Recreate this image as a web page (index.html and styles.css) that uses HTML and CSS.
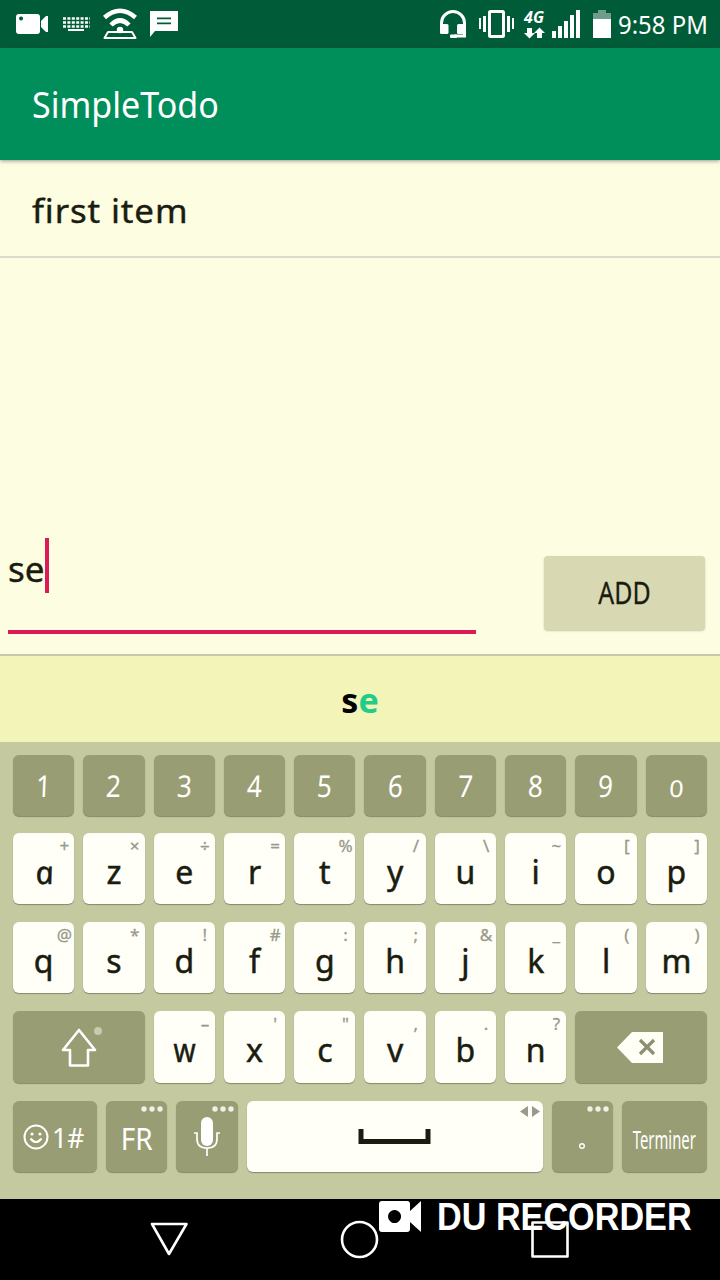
FILE: index.html
```html
<!DOCTYPE html>
<html lang="fr">
<head>
<meta charset="utf-8">
<title>SimpleTodo</title>
<link rel="stylesheet" href="styles.css">
</head>
<body>
<div class="phone">
  <header class="status">
    <svg class="status-icons" width="180" height="48" viewBox="0 0 180 48" fill="#fff">
      <path fill-rule="evenodd" d="M19 14h18q3 0 3 3v14q0 3-3 3H19q-3 0-3-3V17q0-3 3-3zm2 2.500a2 2 0 1 0 .1 0zM41 21l5-5h2v16h-2l-5-5z"/>
      <path d="M63 18.500H90M63 22.500H90M63 26.500H90" stroke="#fff" stroke-width="2.600" stroke-dasharray="3 1.400" fill="none"/>
      <path d="M68 29h16v2H68z"/>
      <g fill="none" stroke="#fff" stroke-width="4.500"><path d="M104.500 17.500Q120 4 135.500 17.500"/><path d="M111 25Q120 16 129 25"/></g>
      <circle cx="120" cy="30" r="3.200"/>
      <path d="M108 32h24l3.500 6H104.500z" fill="none" stroke="#fff" stroke-width="2" stroke-linejoin="round"/>
      <path fill-rule="evenodd" d="M150 11h28v20h-23l-5 6zM157 17.500v1.800h14v-1.800zm0 5v1.800h14v-1.800z"/>
    </svg>
    <div class="status-right">
      <svg width="182" height="48" viewBox="436 0 182 48" fill="#fff">
        <path d="M441.500 29v-6a11.500 11.500 0 0 1 23 0v13h-10" fill="none" stroke="#fff" stroke-width="3"/>
        <rect x="440" y="24" width="8.500" height="10" rx="1.500"/><rect x="457" y="24" width="8.500" height="10" rx="1.500"/><rect x="450" y="34.500" width="7" height="3.500" rx="1"/>
        <rect x="489.500" y="11.500" width="14" height="25" rx="1" fill="none" stroke="#fff" stroke-width="3"/>
        <path d="M479 18h2v11h-2zM483 16h3v16h-3zM507 16h3v16h-3zM512 18h2v11h-2z"/>
        <text class="network" x="524" y="22.500" textLength="20">4G</text>
        <path d="M527 28h5v5h3l-5.500 5.500L524 33h3zM537 38v-5h-3l5.500-5.500L545 33h-3v5z"/>
        <path d="M552 31h4v7h-4zM558 26h4v12h-4zM564 21h4v17h-4zM570 15h4v23h-4zM576 10h4v28h-4z"/>
        <path d="M598 10h8v3h5v6h-18v-6h5z" fill="#6e9d8c"/><path d="M593 19h18v19h-18z"/>
      </svg>
      <span class="clock">9:58 PM</span>
    </div>
  </header>
  <div class="toolbar"><h1>SimpleTodo</h1></div>
  <main class="content">
    <ul class="list"><li><span>first item</span></li></ul>
    <div class="entry">
      <div class="field"><span>se</span><i class="caret"></i></div>
      <button class="add"><span>ADD</span></button>
    </div>
  </main>
  <div class="suggestion">s<span>e</span></div>
  <section class="keyboard">
    <div class="row digits">
      <div class="key dark"><span>1</span></div><div class="key dark"><span>2</span></div><div class="key dark"><span>3</span></div><div class="key dark"><span>4</span></div><div class="key dark"><span>5</span></div><div class="key dark"><span>6</span></div><div class="key dark"><span>7</span></div><div class="key dark"><span>8</span></div><div class="key dark"><span>9</span></div><div class="key dark"><span class="zero">0</span></div>
    </div>
    <div class="row">
      <div class="key"><span class="round">a</span><sup>+</sup></div><div class="key">z<sup>×</sup></div><div class="key">e<sup>÷</sup></div><div class="key">r<sup>=</sup></div><div class="key">t<sup>%</sup></div><div class="key">y<sup>/</sup></div><div class="key">u<sup>\</sup></div><div class="key">i<sup>~</sup></div><div class="key">o<sup>[</sup></div><div class="key">p<sup>]</sup></div>
    </div>
    <div class="row">
      <div class="key">q<sup>@</sup></div><div class="key">s<sup>*</sup></div><div class="key">d<sup>!</sup></div><div class="key">f<sup>#</sup></div><div class="key">g<sup>:</sup></div><div class="key">h<sup>;</sup></div><div class="key">j<sup>&amp;</sup></div><div class="key">k<sup>_</sup></div><div class="key">l<sup>(</sup></div><div class="key">m<sup>)</sup></div>
    </div>
    <div class="row">
      <div class="key dark wide"><svg width="131" height="72" viewBox="0 0 131 72"><path d="M66 19L50 39h7v15.500h18V39H82z" fill="none" stroke="#fff" stroke-width="2.600" stroke-linejoin="round"/><circle cx="85" cy="20" r="4" fill="#c9c9b0"/></svg></div><div class="key"><span class="narrow">w</span><sup>–</sup></div><div class="key">x<sup>'</sup></div><div class="key">c<sup>"</sup></div><div class="key">v<sup>,</sup></div><div class="key">b<sup>.</sup></div><div class="key">n<sup>?</sup></div><div class="key dark wide"><svg width="131" height="72" viewBox="0 0 131 72"><path d="M41 36.500L56 21h31v31H56z" fill="#fffff6"/><path d="M64 29l14 14M78 29l-14 14" stroke="#8d8f72" stroke-width="3.200"/></svg></div>
    </div>
    <div class="row bottom">
      <div class="key dark symbols"><svg width="26" height="26" viewBox="0 0 26 26"><circle cx="13" cy="13" r="11.500" fill="none" stroke="#fff" stroke-width="2"/><circle cx="9" cy="10" r="1.600" fill="#fff"/><circle cx="17" cy="10" r="1.600" fill="#fff"/><path d="M7.500 14.500q5.500 7 11 0" fill="none" stroke="#fff" stroke-width="2.200"/></svg><span>1#</span></div>
      <div class="key dark lang"><span>FR</span><svg class="more" width="24" height="6" viewBox="0 0 24 6"><circle cx="3" cy="3" r="2.700"/><circle cx="11" cy="3" r="2.700"/><circle cx="19" cy="3" r="2.700"/></svg></div>
      <div class="key dark mic"><svg width="26" height="42" viewBox="0 0 26 42"><rect x="7" y="1" width="12" height="29" rx="6" fill="#fff"/><path d="M0 17h3v6q0 9 10 9t10-9v-6h3M13 32v8" fill="none" stroke="#fff" stroke-width="1.700"/></svg><svg class="more" width="24" height="6" viewBox="0 0 24 6"><circle cx="3" cy="3" r="2.700"/><circle cx="11" cy="3" r="2.700"/><circle cx="19" cy="3" r="2.700"/></svg></div>
      <div class="key space"><svg width="74" height="18" viewBox="0 0 74 18"><path d="M3 1v12.500h67V1" fill="none" stroke="#1a1c10" stroke-width="5"/></svg><svg class="arrows" width="20" height="12" viewBox="0 0 20 12" fill="#989a8c"><path d="M8 0v11L0 5.500zM12 0v11l8-5.500z"/></svg></div>
      <div class="key dark dot"><svg width="8" height="8" viewBox="0 0 8 8"><circle cx="4" cy="4" r="2.300" fill="none" stroke="#fff" stroke-width="1.400"/></svg><svg class="more" width="24" height="6" viewBox="0 0 24 6"><circle cx="3" cy="3" r="2.700"/><circle cx="11" cy="3" r="2.700"/><circle cx="19" cy="3" r="2.700"/></svg></div>
      <div class="key dark done"><span>Terminer</span></div>
    </div>
  </section>
  <footer class="nav">
    <svg width="720" height="81" viewBox="0 1199 720 81" fill="none" stroke="#fff" stroke-width="2.600" stroke-linejoin="round">
      <path d="M152 1224h34.500L169 1254z"/><circle cx="359.500" cy="1239.500" r="17.500"/><rect x="532.500" y="1222.500" width="35" height="34"/>
    </svg>
    <div class="watermark">
      <svg width="43" height="32" viewBox="0 0 43 32"><path fill="#fff" fill-rule="evenodd" d="M3 0h25q3 0 3 3v7L42 0v31L31 21v7q0 3-3 3H3q-3 0-3-3V3q0-3 3-3zm12.500 9a6.500 6.500 0 1 0 .1 0z"/></svg>
      <span>DU RECORDER</span>
    </div>
  </footer>
</div>
</body>
</html>
```
FILE: styles.css
```css
* { box-sizing: border-box; }
body { margin: 0; font-family: "Noto Sans", "Open Sans", sans-serif; color: #1a1c10; }
svg { display: block; flex: none; }
.phone { width: 720px; height: 1280px; display: flex; flex-direction: column; overflow: hidden; background: #fdfde2; }
.status { height: 48px; flex: none; display: flex; justify-content: space-between; background: #005c38; }
.status-right { display: flex; align-items: center; width: 284px; }
.network { font: italic bold 16px "Noto Sans", sans-serif; }
.clock { color: #fff; font-size: 26px; line-height: 48px; white-space: nowrap; transform: scaleX(.92); transform-origin: left; }
.toolbar { height: 112px; flex: none; display: flex; align-items: center; padding-left: 32px; background: #008f5a; box-shadow: 0 1px 4px rgba(60, 50, 70, .5); z-index: 1; }
.toolbar h1 { margin: 0; color: #fff; font-size: 36px; font-weight: 400; line-height: 48px; padding-top: 2px; transform: scaleX(.945); transform-origin: left; }
.content { height: 494px; flex: none; display: flex; flex-direction: column; justify-content: space-between; }
.list { margin: 0; padding: 0; list-style: none; }
.list li { height: 98px; padding: 27px 32px 0; border-bottom: 2px solid #dcdccb; font-size: 32px; line-height: 48px; letter-spacing: .8px; }
.list span { display: inline-block; transform: scaleX(1.09); transform-origin: left; -webkit-text-stroke: .4px #1a1c10; }
.entry { display: flex; justify-content: space-between; height: 118px; padding: 0 15px 0 8px; }
.field { display: flex; width: 468px; height: 98px; padding-top: 2px; border-bottom: 4px solid #dc1a55; font-size: 35px; line-height: 62px; -webkit-text-stroke: .4px #1a1c10; }
.caret { width: 4px; height: 55px; background: #dc1a55; }
.add { width: 161px; height: 74px; margin-top: 20px; padding: 0 0 2px; border: 0; border-radius: 4px; background: #d8d8b2; color: #1a1c10; font: 30px "Noto Sans", sans-serif; box-shadow: 0 1px 2px rgba(120, 120, 80, .4); }
.add span { display: inline-block; transform: scaleX(.83); -webkit-text-stroke: .3px #1a1c10; }
.suggestion { height: 88px; flex: none; border-top: 2px solid #c8c8b0; background: #f2f4b8; text-align: center; font-size: 34px; font-weight: 700; line-height: 88px; color: #000; }
.suggestion span { color: #22cc88; }
.keyboard { height: 457px; flex: none; padding: 13px 13px 0; display: flex; flex-direction: column; gap: 18px; background: #c5c9a0; }
.row { display: grid; grid-template-columns: repeat(10, 1fr); gap: 9px; height: 71px; }
.key { position: relative; display: flex; justify-content: center; align-items: center; padding-top: 6px; border-radius: 6px; background: #fffff8; box-shadow: 0 1px 1px #85886c; font-size: 32px; line-height: 44px; -webkit-text-stroke: .5px #1a1c10; }
.key sup { position: absolute; top: 3px; right: 0; width: 20px; text-align: center; font-size: 17px; line-height: 20px; color: #989a8c; -webkit-text-stroke: .3px #989a8c; }
.round { font-style: italic; transform: skewX(10deg); }
.narrow { transform: scaleX(.88); }
.dark { background: #999d73; color: #fff; -webkit-text-stroke: 0; }
.digits { height: 61px; margin-bottom: -1px; }
.digits .key { padding-top: 1px; font-size: 30px; }
.digits span { transform: scaleX(.87) skewX(-3deg); }
.digits .zero { font-size: 23px; padding-top: 3px; transform: scaleX(1.1) skewX(-3deg); }
.wide { grid-column: span 2; padding: 0; }
.bottom { display: flex; margin-top: 1px; }
.bottom .key { padding: 0; flex: none; width: 61.300px; }
.bottom .symbols { width: 84px; gap: 3px; font-size: 28px; }
.symbols span { transform: scaleX(.95); transform-origin: left; }
.bottom .lang { font-size: 31px; padding-top: 3px; }
.lang span { transform: scaleX(.9); }
.bottom .space { flex: 1; }
.bottom .done { width: 85px; font-size: 26px; padding-top: 4px; }
.done span { transform: scaleX(.57); }
.bottom .dot { padding-top: 18px; }
.bottom .mic { padding-top: 1px; }
.more { position: absolute; top: 5px; right: 2px; fill: #f0f0e4; }
.arrows { position: absolute; top: 5px; right: 3px; }
.nav { position: relative; height: 81px; flex: none; background: #000; }
.watermark { position: absolute; left: 379px; top: 1px; display: flex; align-items: center; gap: 15px; color: #fff; }
.watermark span { font: bold 38px/34px "Liberation Sans", Arial, sans-serif; white-space: nowrap; transform: scaleX(.9); transform-origin: left; }
```
